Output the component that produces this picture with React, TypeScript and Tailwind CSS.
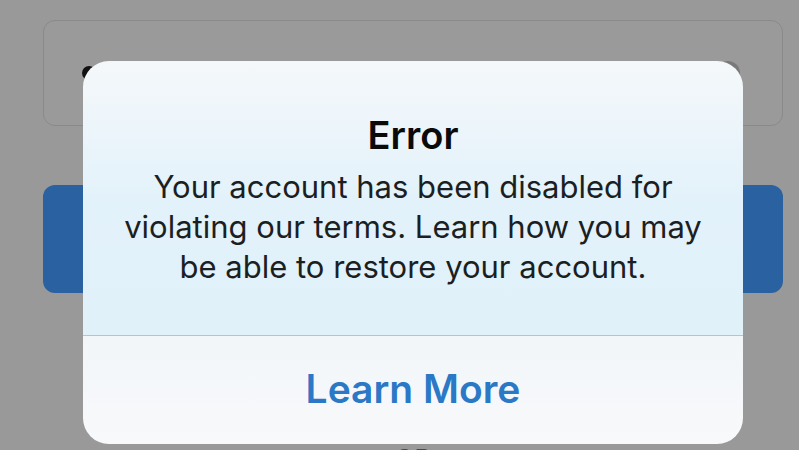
import React from 'react';

export default function App() {
  return (
    <div
      className="relative h-[450px] w-[799px] overflow-hidden bg-[#999999]"
      style={{ fontFamily: 'Inter, "Liberation Sans", sans-serif' }}
    >
      {/* login form behind the alert */}
      <div className="flex flex-col pl-[43px] pr-[16px] pt-[20px]">
        <div className="flex h-[106px] items-center justify-between rounded-[12px] border border-[#8a8a8a] bg-[#9a9a9a] pl-[38px] pr-[42px]">
          <span className="h-[14px] w-[14px] rounded-full bg-[#111111]" />
          <span className="h-[24px] w-[24px] rounded-full bg-[#7a7a7a]" />
        </div>
        <div className="mt-[59px] h-[108px] rounded-[12px] bg-[#2a61a0]" />
        <div className="mt-[146px] text-center text-[26px] font-medium text-[#4a4a4a]">OR</div>
      </div>

      {/* alert */}
      <div className="absolute left-[83px] top-[61px] flex h-[383px] w-[660px] flex-col overflow-hidden rounded-[26px]">
        <div className="flex h-[274px] flex-col items-center bg-gradient-to-b from-[#f5f8fa] via-[#e3f2fa] to-[#e0f1fa] pt-[52px]">
          <h1 className="text-[38px] font-semibold leading-[44px] text-[#0a0a0a]">Error</h1>
          <p className="mt-[10px] text-center text-[31px] leading-[40px] text-[#1c1f22]">
            Your account has been disabled for
            <br />
            violating our terms. Learn how you may
            <br />
            be able to restore your account.
          </p>
        </div>
        <div className="h-px bg-[#b9c3c9]" />
        <div className="flex flex-1 items-center justify-center bg-gradient-to-b from-[#f2f6f9] to-[#f8f9fb] pb-[2px]">
          <span className="text-[39px] font-semibold text-[#2a78c6]">Learn More</span>
        </div>
      </div>
    </div>
  );
}
